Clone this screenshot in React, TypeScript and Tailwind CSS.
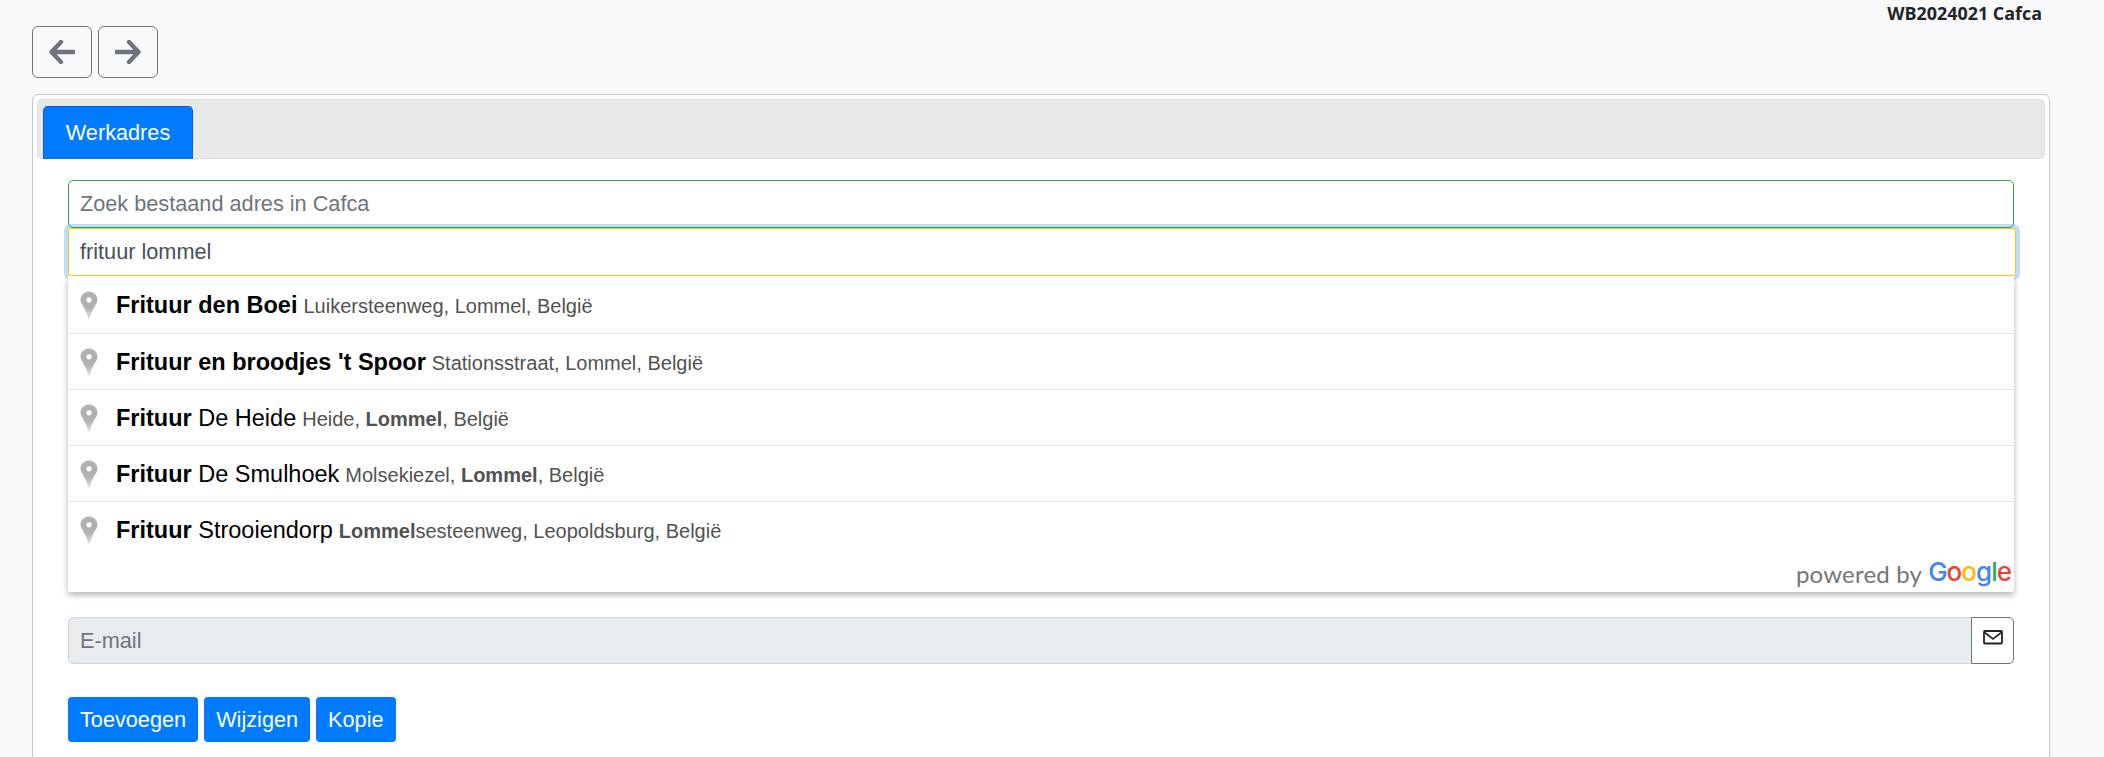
const results = [
  { query: [{ t: "Frituur den Boei", b: true }], sub: [{ t: "Luikersteenweg, Lommel, België", b: false }] },
  { query: [{ t: "Frituur en broodjes 't Spoor", b: true }], sub: [{ t: "Stationsstraat, Lommel, België", b: false }] },
  {
    query: [{ t: "Frituur", b: true }, { t: " De Heide", b: false }],
    sub: [{ t: "Heide, ", b: false }, { t: "Lommel", b: true }, { t: ", België", b: false }],
  },
  {
    query: [{ t: "Frituur", b: true }, { t: " De Smulhoek", b: false }],
    sub: [{ t: "Molsekiezel, ", b: false }, { t: "Lommel", b: true }, { t: ", België", b: false }],
  },
  {
    query: [{ t: "Frituur", b: true }, { t: " Strooiendorp", b: false }],
    sub: [{ t: "Lommel", b: true }, { t: "sesteenweg, Leopoldsburg, België", b: false }],
  },
];

const Pin = () => (
  <svg width="18" height="28" viewBox="0 0 18 28" className="shrink-0">
    <defs>
      <linearGradient id="pinFade" x1="0" y1="0" x2="0" y2="1">
        <stop offset="0.6" stopColor="#b0b0b0" />
        <stop offset="1" stopColor="#e2e2e2" />
      </linearGradient>
    </defs>
    <path
      fillRule="evenodd"
      fill="url(#pinFade)"
      d="M9 0.5C4.2 0.5 0.5 4.2 0.5 8.8C0.5 13.5 6.5 17.5 8 27.5H10C11.5 17.5 17.5 13.5 17.5 8.8C17.5 4.2 13.8 0.5 9 0.5ZM9 6.2A2.6 2.6 0 1 1 9 11.4A2.6 2.6 0 1 1 9 6.2Z"
    />
  </svg>
);

const Arrow = ({ right }: { right?: boolean }) => (
  <svg width="26" height="24" viewBox="0 0 26 24" className={right ? "rotate-180" : ""}>
    <path
      d="M12 2L2.5 12L12 22M3 12H25"
      fill="none"
      stroke="#6c757d"
      strokeWidth="4.4"
      strokeLinejoin="round"
      strokeLinecap="round"
    />
  </svg>
);

const App = () => {
  return (
    <div className="h-[757px] overflow-hidden bg-[#f8f9fa] font-['Liberation_Sans',Arial,sans-serif] text-[21.7px] text-[#212529]">
      <div className="flex justify-between pl-8 pr-[62px]">
        <div className="flex gap-[6px] pt-[26px]">
          <button className="flex h-[52px] w-[60px] items-center justify-center rounded-[6px] border border-[#6c757d]">
            <Arrow />
          </button>
          <button className="flex h-[52px] w-[60px] items-center justify-center rounded-[6px] border border-[#6c757d]">
            <Arrow right />
          </button>
        </div>
        <div className="pt-px font-['Open_Sans',sans-serif] text-[17.9px] leading-[24px] font-bold">
          WB2024021 Cafca
        </div>
      </div>

      <div className="mt-4 ml-8 h-[700px] w-[2018px] rounded-[6px] border border-[#c6c8ca] bg-white p-1">
        <div className="flex h-[60px] items-end rounded-[5px] border border-[#dedede] bg-[#e8e8e8] pl-[5px]">
          <div className="-mb-px flex h-[53px] w-[150px] items-center justify-center rounded-t-[5px] border border-b-0 border-[#0a58f0] bg-[#007bff] text-white">
            Werkadres
          </div>
        </div>

        <div className="px-[31px] pt-[21px]">
          <div className="relative z-10 flex h-[48px] w-[1946px] items-center rounded-[5px] border border-[#28a745] bg-transparent px-[11px] pt-px text-[#6c757d]">
            Zoek bestaand adres in Cafca
          </div>
          <div className="h-[48px] w-[1948px] rounded-[3px] shadow-[0_0_0_4px_#bfdcfd]">
            <div className="relative z-[2] flex h-full items-center rounded-[3px] border border-[#ffc107] bg-white px-[11px] text-[#495057]">
              frituur lommel
            </div>
          </div>

          <div className="relative z-[1] w-[1946px] rounded-b-[3px] bg-white pt-px shadow-[0_3px_6px_rgba(0,0,0,0.3)]">
            {results.map((r, i) => (
              <div
                key={i}
                className={`flex h-[56px] items-center pl-3 ${i > 0 ? "border-t border-[#e6e6e6]" : ""}`}
              >
                <Pin />
                <div className="ml-[18px] whitespace-pre pt-[2px]">
                  <span className="text-[23.5px] text-black">
                    {r.query.map((q, j) => (
                      <span key={j} className={q.b ? "font-bold" : ""}>
                        {q.t}
                      </span>
                    ))}
                  </span>
                  <span className="ml-[6px] text-[20px] text-[#515151]">
                    {r.sub.map((q, j) => (
                      <span key={j} className={q.b ? "font-bold" : ""}>
                        {q.t}
                      </span>
                    ))}
                  </span>
                </div>
              </div>
            ))}
            <div className="flex h-[35px] items-start justify-end pr-[3px] font-['Lato',sans-serif] text-[24px] leading-[26px] tracking-[0.2px]">
              <span className="mt-[4px] mr-[6px] text-[#757575]">powered by</span>
              <span className="font-['Inter',sans-serif] text-[26px] leading-[30px] font-medium tracking-[-1px]">
                <span className="text-[#4285f4]">G</span>
                <span className="text-[#ea4335]">o</span>
                <span className="text-[#fbbc05]">o</span>
                <span className="text-[#4285f4]">g</span>
                <span className="text-[#34a853]">l</span>
                <span className="text-[#ea4335]">e</span>
              </span>
            </div>
          </div>

          <div className="mt-[25px] flex h-[47px] w-[1946px]">
            <div className="flex grow items-center rounded-l-[5px] border border-[#ced4da] bg-[#e9ecef] px-[11px] pt-px text-[#6c757d]">
              E-mail
            </div>
            <div className="-ml-px flex w-[43px] items-start justify-center rounded-r-[5px] border border-[#6c757d] bg-white pt-[12px]">
              <svg width="20" height="15" viewBox="0 0 20 15">
                <rect x="1" y="1" width="18" height="12.5" rx="1" fill="none" stroke="#212529" strokeWidth="1.8" />
                <path d="M1 2L10 9L19 2" fill="none" stroke="#212529" strokeWidth="1.6" />
              </svg>
            </div>
          </div>

          <div className="mt-[33px] flex gap-[6px]">
            {["Toevoegen", "Wijzigen", "Kopie"].map((label) => (
              <button key={label} className="h-[45px] rounded-[4px] bg-[#007bff] px-3 pt-px text-white">
                {label}
              </button>
            ))}
          </div>
        </div>
      </div>
    </div>
  );
};

export default App;
